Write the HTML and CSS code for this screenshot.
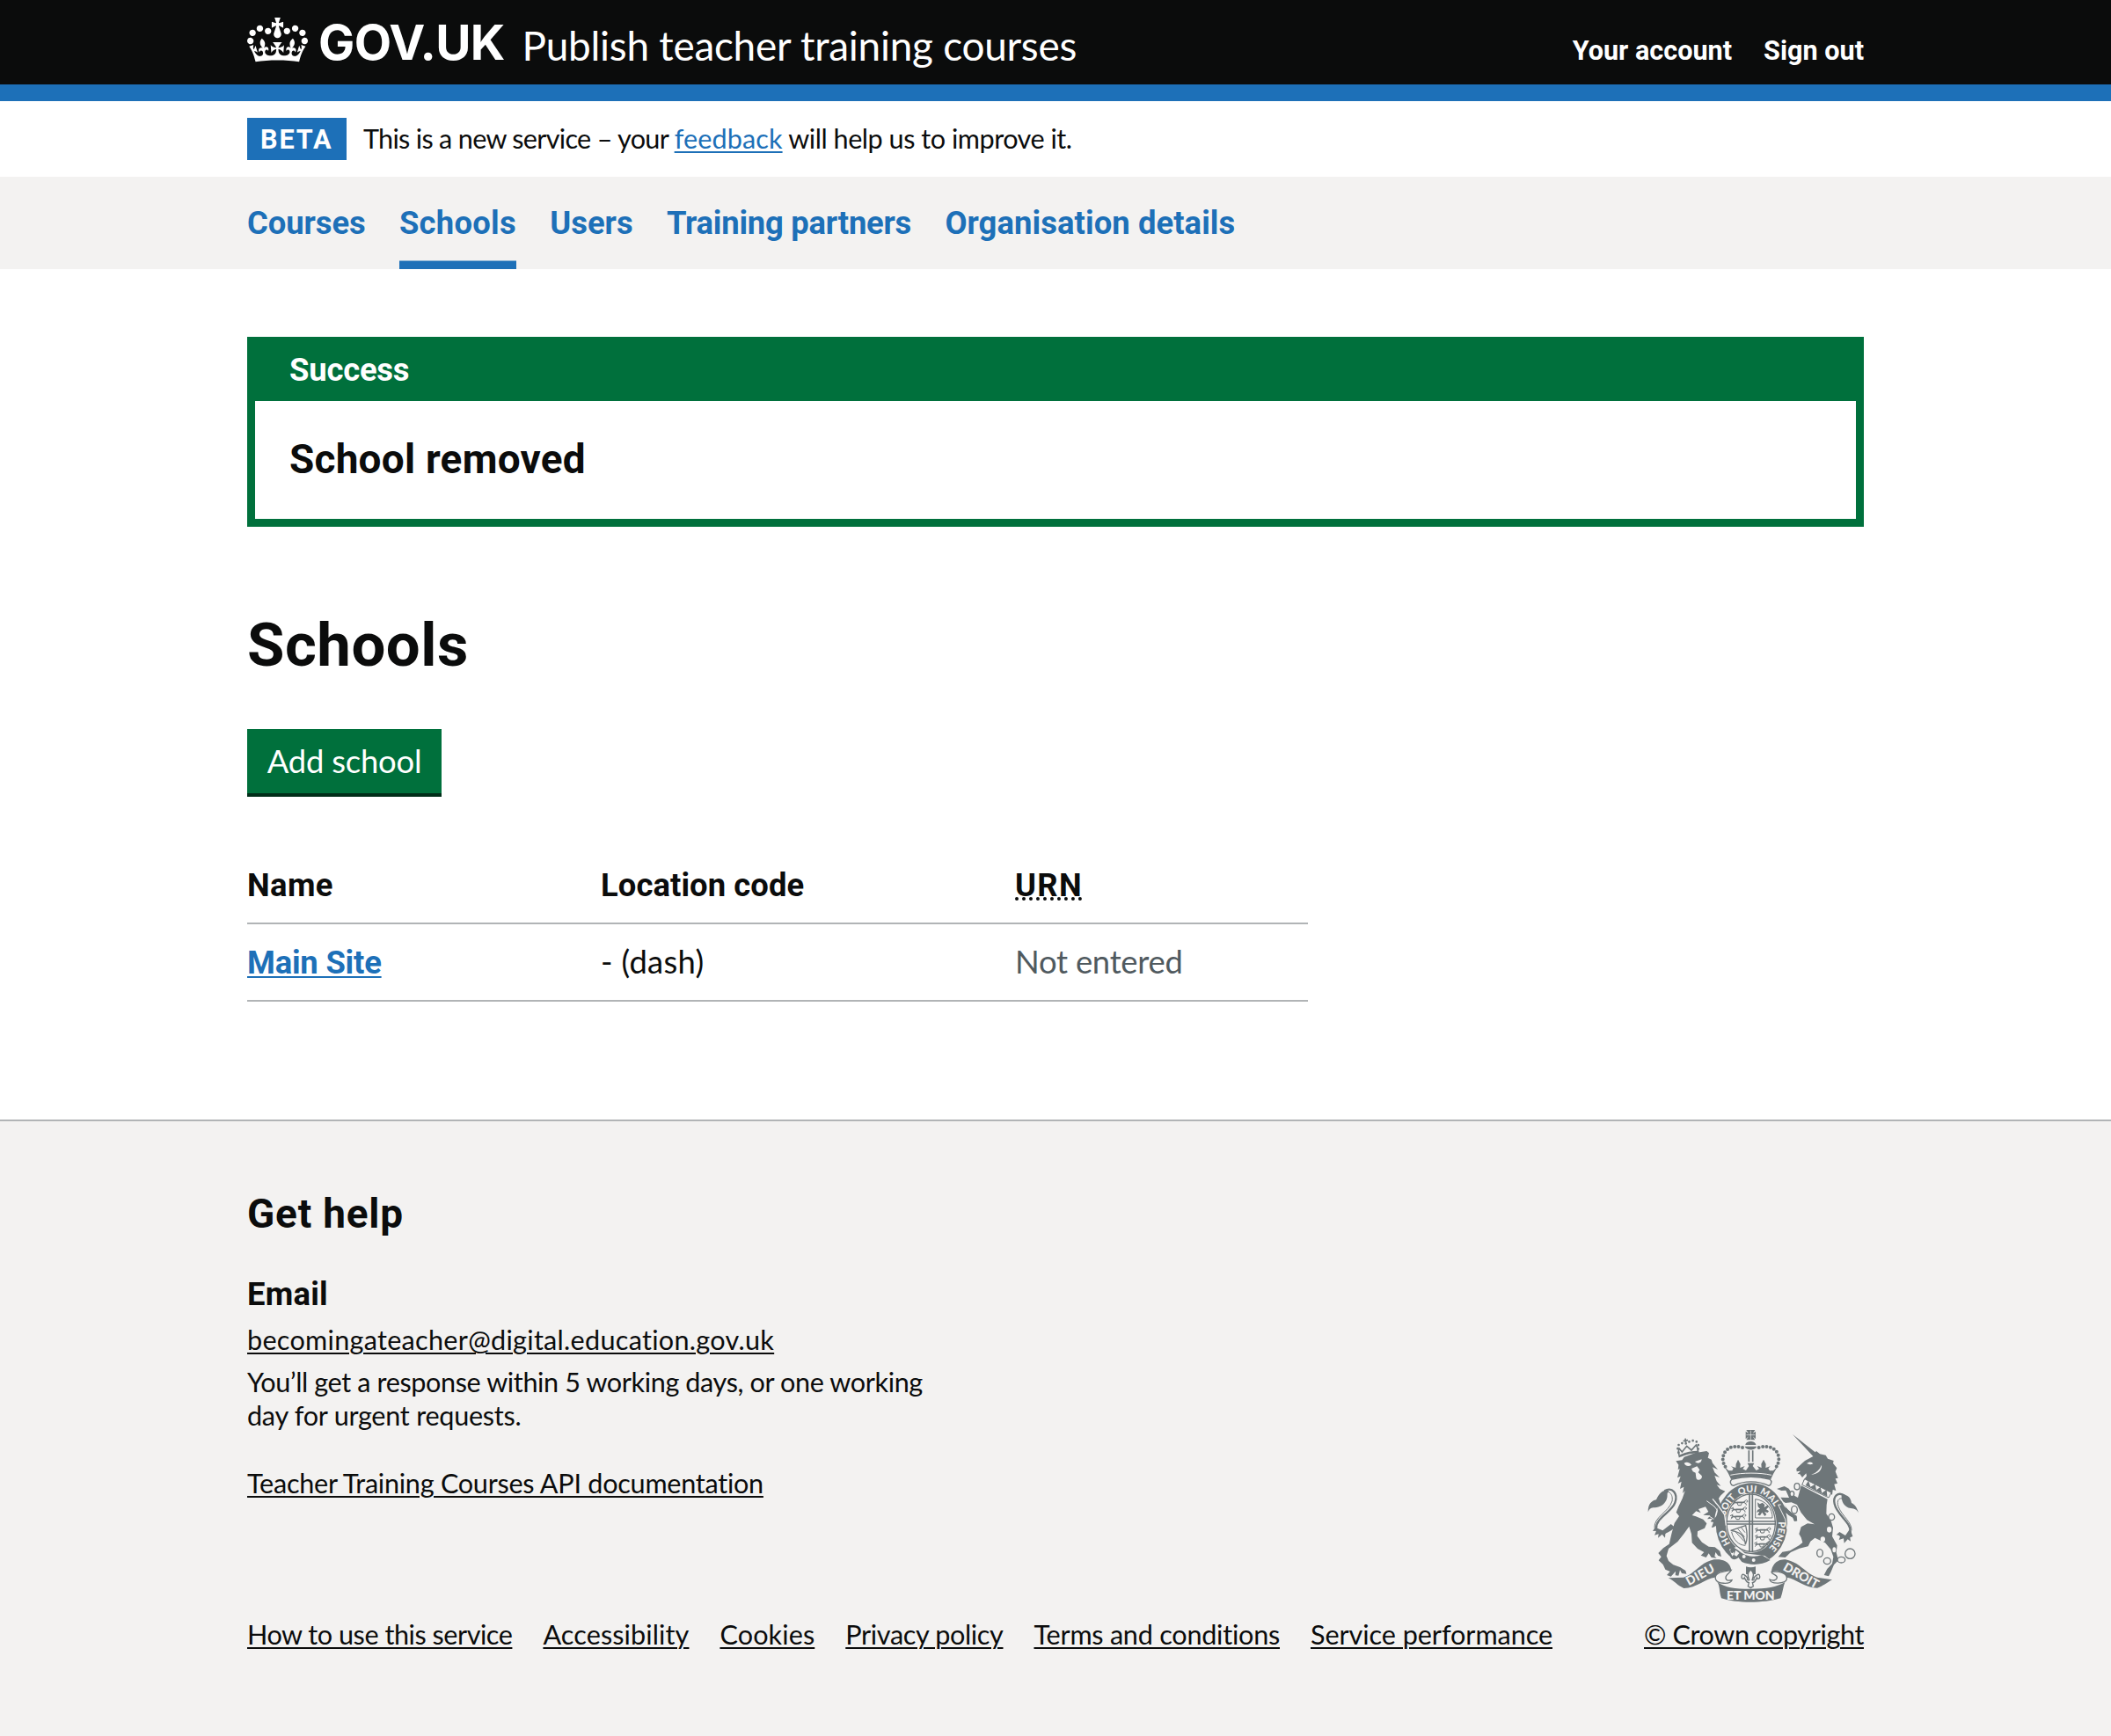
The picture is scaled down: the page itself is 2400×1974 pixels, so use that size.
FILE: index.html
```html
<!DOCTYPE html>
<html lang="en">
<head>
<meta charset="utf-8">
<title>Schools - Publish teacher training courses - GOV.UK</title>
<link rel="stylesheet" href="styles.css">
</head>
<body>
<header class="header">
  <div class="container header-row">
    <a class="logo" href="#">
      <svg class="logo-crown" viewBox="0 0 132 97" aria-hidden="true"><path fill="currentColor" fill-rule="evenodd" d="M25 30.2c3.5 1.5 7.7-.2 9.1-3.7 1.5-3.6-.2-7.8-3.9-9.2-3.6-1.4-7.6.3-9.1 3.9-1.4 3.5.3 7.5 3.9 9zM9 39.5c3.6 1.5 7.8-.2 9.2-3.7 1.5-3.6-.2-7.8-3.9-9.1-3.6-1.5-7.6.2-9.1 3.8-1.4 3.5.3 7.5 3.8 9zM4.4 57.2c3.5 1.5 7.7-.2 9.1-3.8 1.5-3.6-.2-7.7-3.9-9.1-3.5-1.5-7.6.3-9.1 3.8-1.4 3.5.3 7.6 3.9 9.1zm38.3-21.4c3.5 1.5 7.7-.2 9.1-3.8 1.5-3.6-.2-7.7-3.9-9.1-3.6-1.5-7.6.3-9.1 3.8-1.3 3.6.4 7.7 3.9 9.1zm64.4-5.6c-3.6 1.5-7.8-.2-9.1-3.7-1.5-3.6.2-7.8 3.8-9.2 3.6-1.4 7.7.3 9.2 3.9 1.3 3.5-.4 7.5-3.9 9zm15.9 9.3c-3.6 1.5-7.7-.2-9.1-3.7-1.5-3.6.2-7.8 3.7-9.1 3.6-1.5 7.7.2 9.2 3.8 1.5 3.5-.3 7.5-3.8 9zm4.7 17.7c-3.6 1.5-7.8-.2-9.2-3.8-1.5-3.6.2-7.7 3.9-9.1 3.6-1.5 7.7.3 9.2 3.8 1.3 3.5-.4 7.6-3.9 9.1zM89.3 35.8c-3.6 1.5-7.8-.2-9.2-3.8-1.4-3.6.2-7.7 3.9-9.1 3.6-1.5 7.7.3 9.2 3.8 1.4 3.6-.3 7.7-3.9 9.1zM69.7 17.7l8.9 4.7V9.3l-8.9 2.8c-.2-.3-.5-.6-.9-.9L72.4 0H59.6l3.5 11.2c-.3.3-.6.5-.9.9l-8.8-2.8v13.1l8.8-4.7c.3.3.6.7.9.9l-5 15.4v.1c-.2.8-.4 1.6-.4 2.4 0 4.1 3.1 7.5 7 8.1h.2c.3 0 .7.1 1 .1.4 0 .7 0 1-.1h.2c4-.6 7.1-4.1 7.1-8.1 0-.8-.1-1.7-.4-2.4V34l-5.1-15.4c.4-.2.7-.6 1-.9zM66 92.8c16.9 0 32.8 1.1 47.1 3.2 4-16.9 8.9-26.7 14-33.5l-9.6-3.4c1 4.9 1.1 7.2 0 10.2-1.5-1.4-3-4.3-4.2-8.7L108.6 76c2.8-2 5-3.2 7.5-3.3-4.4 9.4-10 11.9-13.6 11.2-4.3-.8-6.3-4.6-5.6-7.9 1-4.7 5.7-5.9 8-.5 4.3-8.7-3-11.4-7.6-8.8 7.1-7.2 7.9-13.5 2.1-21.1-8 6.1-8.1 12.3-4.5 20.8-4.7-5.4-12.1-2.5-9.5 6.2 3.4-5.2 7.9-2 7.2 3.1-.6 4.3-6.4 7.8-13.5 7.2-10.3-.9-10.9-8-11.2-13.8 2.5-.5 7.1 1.8 11 7.3L80.2 60c-4.1 4.4-8 5.3-12.3 5.4 1.4-4.4 8-11.6 8-11.6H55.5s6.4 7.2 7.9 11.6c-4.2-.1-8-1-12.3-5.4l1.4 16.4c3.9-5.5 8.5-7.7 10.9-7.3-.3 5.8-.9 12.8-11.1 13.8-7.2.6-12.9-2.9-13.5-7.2-.7-5 3.8-8.3 7.1-3.1 2.7-8.7-4.6-11.6-9.4-6.2 3.7-8.5 3.6-14.7-4.6-20.8-5.8 7.6-5 13.9 2.2 21.1-4.7-2.6-11.9.1-7.7 8.8 2.3-5.5 7.1-4.2 8.1.5.7 3.3-1.3 7.1-5.7 7.9-3.5.7-9-1.8-13.5-11.2 2.5.1 4.7 1.3 7.5 3.3l-4.7-15.4c-1.2 4.4-2.7 7.2-4.3 8.7-1.1-3-.9-5.3 0-10.2l-9.5 3.4c5 6.9 9.9 16.7 14 33.5 14.8-2.1 30.8-3.2 47.7-3.2z"/></svg>
      <span class="logo-text">GOV.UK</span>
    </a>
    <a class="service-name" href="#">Publish teacher training courses</a>
    <nav class="account-nav"><a href="#">Your account</a><a href="#">Sign out</a></nav>
  </div>
</header>

<div class="container phase-banner">
  <strong class="tag">BETA</strong>
  <p class="phase-text"><span class="phase-lead">This is a new service – your </span><a class="link phase-link" href="#">feedback</a><span class="phase-tail"> will help us to improve it.</span></p>
</div>

<nav class="primary-nav">
  <ul class="container nav-list">
    <li><a href="#">Courses</a></li>
    <li class="current"><a href="#">Schools</a></li>
    <li><a href="#">Users</a></li>
    <li><a href="#">Training partners</a></li>
    <li><a href="#">Organisation details</a></li>
  </ul>
</nav>

<main class="container main">
  <section class="notification">
    <h2 class="notification-title">Success</h2>
    <p class="notification-body">School removed</p>
  </section>
  <h1 class="page-title">Schools</h1>
  <a class="button" href="#">Add school</a>
  <table class="table">
    <thead><tr><th class="col-name">Name</th><th class="col-code">Location code</th><th class="col-urn"><abbr title="Unique reference number">URN</abbr></th></tr></thead>
    <tbody><tr><td class="site"><a class="link" href="#">Main Site</a></td><td class="code">- (dash)</td><td class="hint">Not entered</td></tr></tbody>
  </table>
</main>

<footer class="footer">
  <div class="container">
    <h2 class="footer-title">Get help</h2>
    <h3 class="footer-subtitle">Email</h3>
    <p class="footer-email"><a href="#">becomingateacher@digital.education.gov.uk</a></p>
    <p class="footer-note"><span class="note-a">You’ll get a response within 5 working days, or one working</span><br><span class="note-b">day for urgent requests.</span></p>
    <div class="footer-meta">
      <div class="footer-left">
        <p class="footer-api"><a href="#">Teacher Training Courses API documentation</a></p>
        <ul class="footer-links">
          <li><a href="#">How to use this service</a></li>
          <li><a href="#">Accessibility</a></li>
          <li><a href="#">Cookies</a></li>
          <li><a href="#">Privacy policy</a></li>
          <li><a href="#">Terms and conditions</a></li>
          <li><a href="#">Service performance</a></li>
        </ul>
      </div>
      <div class="copyright">
        <svg class="crest" viewBox="40 42 722 594" aria-hidden="true">
          <defs>
            <path id="motto" d="M395 473A92 108 0 0 1 303 365A92 108 0 0 1 395 257A92 108 0 0 1 487 365A92 108 0 0 1 395 473"/>
            <g id="beast" fill="none" stroke="currentColor" stroke-width="3">
              <path stroke-width="5" d="M8 7Q12 13 22 10H38Q44 11 46 6"/>
              <path d="M2 8L12 3M12 11L5 19M5 13H10M20 11L23 20H29M36 11L33 20H28M42 10L50 14L51 20M45 6Q52 -2 56 5Q57 10 51 9"/>
            </g>
          </defs>

          <!-- Lion's tail -->
          <path class="fill" d="M42 325C42 295 55 287 70 283C80 260 94 246 113 253C103 262 112 269 104 285C94 306 74 310 60 310C50 311 45 317 42 325Z"/>
          <path class="line" stroke-width="7" d="M98 253C125 238 145 262 134 293C123 326 67 344 70 382C74 405 105 398 130 376"/>
          <path class="line" stroke-width="3" d="M88 262C114 246 128 264 124 288C112 326 62 341 64 379"/>
          <path class="fill" d="M66 377L58 390L70 389L64 404L78 400L76 413L90 401L100 413L101 399L130 374L120 366L92 388Z"/>

          <!-- Lion -->
          <path class="fill" d="M137 151L158 148L165 137L204 123L242 117L250 124L246 140L258 146L262 158L280 180L262 172L269 190L286 207L269 201L276 220L290 236L276 232L287 246L305 254L289 269L280 283L270 292L282 309L296 327L301 352L307 375L303 385L296 374L291 386L284 371L273 389L270 374L258 378L266 360L255 358L262 347L244 349L254 337L230 335L248 324L238 307L214 315L222 328L206 322L192 336L205 340L230 350L242 364L235 380L211 391L210 407L226 428L249 443L270 445L287 458L292 477L281 474L272 462L269 476L276 482L258 480L249 466L240 480L222 473L233 462L211 450L192 430L190 400L182 374L166 397L143 426L112 450L105 475L112 492L128 505L151 513L170 525L173 536L157 534L151 523L146 542L135 541L136 527L120 545L106 540L117 528L101 521L93 504L78 490L87 478L77 465L94 448L114 434L122 400L132 363L148 339L138 326L146 306L159 279L168 253L160 261L164 239L151 246L156 221L144 228L153 203L142 208L150 177L144 181L146 164Z"/>
          <path class="hole" d="M165 158C174 153 183 156 190 164C181 170 170 169 165 158ZM202 153L225 145C225 157 212 163 202 153ZM190 177L209 169L218 181L213 190L225 201C230 214 207 222 206 208L204 191L195 187Z"/>
          <path class="hole-line" stroke-width="3" d="M242 287L268 306L292 336M249 338L267 350"/>
          <path class="line" stroke-width="5" d="M149 136C146 124 144 116 148 108L158 120L174 100L190 114L206 96C211 103 212 112 212 122C192 120 168 126 149 136Z"/>
          <path class="line" stroke-width="7" d="M152 133C172 124 194 120 215 120"/>
          <path class="dots" stroke-width="8" d="M146 122C137 95 151 86 173 92C194 73 219 80 213 111"/>
          <path class="line" stroke-width="5" d="M169 74L171 90M162 83L178 80"/>

          <!-- Unicorn's tail -->
          <path class="fill" d="M760 328C754 316 748 314 733 312C712 309 700 289 702 266C721 264 733 275 736 294C748 300 754 309 760 328Z"/>
          <path class="line" stroke-width="7" d="M714 270C690 253 672 271 678 297C686 335 734 359 732 392C727 412 706 416 693 400"/>
          <path class="line" stroke-width="3" d="M704 279C687 276 686 295 692 309C706 341 737 359 736 388"/>
          <path class="fill" d="M695 393L684 403L698 405L693 420L709 415L711 431L723 418L733 425L731 412L740 408L731 382L715 405Z"/>

          <!-- Unicorn -->
          <path class="fill" d="M535 60L612 121L616 117L628 127L648 131L655 143L675 150L673 159L686 175L681 187L690 209L681 211L688 227L677 230L683 252L672 249L670 266L571 218L583 202L581 193L568 207L560 196L552 195L562 185L549 187L548 177L563 163L577 150L605 135Z"/>
          <path class="hole" d="M583 159C593 151 601 154 605 160C597 164 590 163 583 159ZM634 164C637 181 620 197 598 197C615 192 627 181 634 164ZM576 212L667 259L658 276L567 232Z"/>
          <path class="line" stroke-width="3" d="M576 212L667 259L658 276L567 232Z"/>
          <path class="fill" d="M579 234L589 218L596 239L612 230L616 250L630 239L635 260L651 248L653 272Z"/>
          <path class="fill" d="M564 235L654 281L651 301L650 331L666 355L673 379L670 408L687 439L684 463L691 490L676 505L665 531L658 544L642 540L653 519L670 501L674 478L665 452L646 430L611 413L596 425L588 442L558 449L529 462L510 480L486 478L500 461L526 457L557 439L569 429L564 412L557 400L564 376L586 364L610 367L584 352L564 327L550 300L531 292L511 294L496 285L519 317L535 331L547 338L551 355L541 356L537 345L514 331L494 304L486 284L494 275L523 276L512 251L497 252L481 246L507 237L522 245L536 266L553 276Z"/>
          <g class="rings">
            <ellipse cx="550" cy="238" rx="9" ry="11"/><ellipse cx="533" cy="263" rx="7" ry="9"/><ellipse cx="541" cy="317" rx="10" ry="13"/>
            <ellipse cx="668" cy="342" rx="10" ry="11"/><ellipse cx="628" cy="465" rx="10" ry="13"/><ellipse cx="653" cy="492" rx="12" ry="11"/><ellipse cx="701" cy="488" rx="13" ry="10"/><circle cx="731" cy="467" r="17"/>
          </g>
          <path class="hole" d="M652 385a8 10 0 1 0 16 0a8 10 0 1 0 -16 0ZM630 418a8 9 0 1 0 16 0a8 9 0 1 0 -16 0ZM671 454a6 9 0 1 0 12 0a6 9 0 1 0 -12 0Z"/>

          <!-- Garter -->
          <ellipse class="hole" cx="395" cy="365" rx="127" ry="144"/>
          <ellipse class="fill" cx="395" cy="365" rx="122" ry="139"/>
          <ellipse class="hole" cx="393" cy="362" rx="87" ry="102"/>
          <ellipse class="line" stroke-width="4" cx="393" cy="362" rx="83" ry="98"/>
          <path class="line" stroke-width="5" d="M388 262V462M398 262V462M308 357H478M308 366H478"/>
          <text class="crest-motto"><textPath href="#motto" startOffset="86">HO</textPath></text>
          <text class="crest-motto"><textPath href="#motto" startOffset="184">SOIT</textPath></text>
          <text class="crest-motto"><textPath href="#motto" startOffset="271">QUI</textPath></text>
          <text class="crest-motto"><textPath href="#motto" startOffset="342">MAL</textPath></text>
          <text class="crest-motto"><textPath href="#motto" startOffset="464">PENSE</textPath></text>
          <path class="fill" d="M270 279L281 273L302 335L307 374L300 386L292 374L282 388L273 372L262 378L266 350L282 330Z"/>
          <path class="hole-line" stroke-width="4" d="M262 280L282 304L303 334L308 371"/>
          <path class="hole-line" stroke-width="3" d="M513 300L486 300L510 350L516 383"/>
          <path class="fill" d="M497 287L508 307L534 330L549 338L550 355L541 356L535 343L511 328L495 303Z"/>

          <!-- Quartered shield -->
          <use href="#beast" x="326" y="282"/><use href="#beast" x="322" y="306"/><use href="#beast" x="320" y="330"/>
          <use href="#beast" x="404" y="376"/><use href="#beast" x="404" y="400"/><use href="#beast" x="402" y="424"/>
          <path class="line" stroke-width="3" d="M408 281V345H466C468 315 443 285 408 281Z"/>
          <path class="fill" d="M415 292l8 6 9-5 8 7-2 9 11-7 5 5-9 9 9 6-4 5-11-3 7 9-6 6-9-13-7 11-8-2 6-12-10 3 4-9 8-3-7-7z"/>
          <path class="line" stroke-width="4" d="M324 388L375 371C382 401 379 425 374 436C372 403 353 392 324 388Z"/>
          <path class="line" stroke-width="3" d="M337 389L370 425M348 382L371 410M360 378L373 395M327 393C333 420 350 438 374 439"/>

          <!-- Buckle and strap -->
          <path class="hole" d="M319 452L345 443L372 466L440 474L458 488L436 507L340 502Z"/>
          <path class="fill" d="M336 447C327 443 319 453 324 462C329 469 336 462 332 459C340 467 330 478 322 478C329 490 343 488 350 480L362 495C386 506 426 509 459 489L430 472C400 482 370 474 349 455Z"/>
          <path class="hole" d="M341 455L353 465L344 476L335 471ZM363 477a6 6 0 1 0 12 0a6 6 0 1 0 -12 0ZM396 489a6 6 0 1 0 12 0a6 6 0 1 0 -12 0Z"/>

          <!-- Crown -->
          <path class="fill" d="M377 45H407L399 57L409 50V76L399 67L407 79H377L385 67L375 76V50L385 57Z"/>
          <path class="hole-line" stroke-width="2" d="M392 47V78M377 62H407"/>
          <path class="fill" d="M374 96C376 80 408 80 410 96ZM372 101H412C409 116 376 116 372 101Z"/>
          <path class="line" stroke-width="5" d="M386 115V154M399 115V154"/>
          <path class="dots" stroke-width="12" d="M364 105C329 95 299 108 297 145C298 158 302 166 308 174"/>
          <path class="dots" stroke-width="12" d="M420 105C455 95 487 108 488 145C487 158 483 166 477 174"/>
          <path class="fill" d="M300 169L317 184L329 184L333 176L325 169L341 174L342 161L349 146L357 161L356 174L372 168L365 178L376 183L386 168L381 158H404L399 168L411 183L421 178L414 168L429 174L428 161L436 146L444 161L443 174L459 169L452 176L457 184L469 184L485 169C472 188 466 202 461 213C417 204 367 204 325 213C319 200 314 187 300 169Z"/>
          <path class="hole-line" stroke-width="3" d="M323 199C365 190 423 190 463 199"/>
          <path class="plate" d="M329 213C369 203 417 203 457 213C466 219 463 232 454 235C416 217 370 217 333 235C322 232 319 219 329 213Z"/>

          <!-- Ribbons -->
          <path class="fill" d="M111 550L163 548C203 535 219 497 267 487C302 484 321 496 326 523C297 531 284 521 270 548C239 551 207 584 164 585C141 575 132 560 111 550Z"/>
          <path class="fill" d="M670 556L619 548C579 535 563 499 516 488C486 482 463 505 463 529C487 523 500 529 514 548C544 551 575 584 619 584C640 577 650 567 670 556Z"/>
          <path class="plate" d="M326 523C299 528 267 531 272 553C277 571 322 573 328 557C320 559 307 561 307 549C306 538 322 533 326 523ZM463 529C486 526 519 532 515 554C511 571 459 572 457 555C470 561 481 557 482 549C483 538 464 539 463 529Z"/>
          <path class="fill" d="M278 563C305 583 337 587 392 587C446 587 481 581 509 564C503 578 502 598 494 619C434 637 346 637 292 619C284 595 288 579 278 563Z"/>
          <text class="crest-text" x="392" y="624" text-anchor="middle" textLength="164">ET MON</text>
          <text class="crest-text" transform="translate(181 577) rotate(-29)" textLength="104">DIEU</text>
          <text class="crest-text" transform="translate(500 521) rotate(30)" textLength="132">DROIT</text>

          <!-- Fleur-de-lis -->
          <path class="fill" d="M376 511C386 515 399 515 409 511V537H376Z"/>
          <path class="plate" d="M392 521C377 536 384 545 387 557C382 559 379 555 381 549C375 542 363 530 361 545C360 555 370 554 371 549C376 559 377 565 386 566L383 578L392 584L401 578L398 566C407 565 408 559 413 549C414 554 424 555 423 545C421 530 409 542 403 549C405 555 402 559 397 557C400 545 407 536 392 521Z"/>
        </svg>
        <a href="#">© Crown copyright</a>
      </div>
    </div>
  </div>
</footer>
</body>
</html>
```
FILE: styles.css
```css
* { box-sizing: border-box; }
body, h1, h2, h3, p, ul { margin: 0; padding: 0; }
ul { list-style: none; }
a { color: inherit; }

body {
  background: #fff;
  color: #0b0c0c;
  font-family: Lato, sans-serif;
  font-size: 30.6px;
  line-height: 38.3px;
}

.container { width: 1838px; margin: 0 auto; }
.link {
  color: #1d70b8;
  text-decoration-thickness: 2px;
  text-underline-offset: 3.4px;
}

/* Header */
.header { background: #0b0c0c; color: #fff; border-bottom: 19px solid #1d70b8; }
.header a { text-decoration: none; }
.header-row { display: flex; height: 96px; }
.logo { display: flex; }
.logo-crown { width: 69px; height: 50.7px; margin: 20px 12px 0 0; }
.logo-text { font: 700 55px/96px Inter, sans-serif; letter-spacing: -.6px; }
.service-name { margin-left: 19.8px; font-size: 45.9px; line-height: 103px; letter-spacing: -.25px; }
.account-nav {
  display: flex;
  gap: 36px;
  margin-left: auto;
  padding-top: 19px;
  font: 700 30.6px/77px Roboto, sans-serif;
}

/* Phase banner */
.phase-banner { display: flex; height: 86px; }
.tag {
  width: 113px;
  height: 48px;
  margin: 19px 19px 0 0;
  padding-left: 15px;
  background: #1d70b8;
  color: #fff;
  font: 700 30.6px/50px Roboto, sans-serif;
  letter-spacing: 1.9px;
}
.phase-text { line-height: 86px; white-space: nowrap; }
.phase-lead { letter-spacing: -.7px; }
.phase-link { letter-spacing: .1px; }
.phase-tail { letter-spacing: -.48px; }

/* Primary navigation */
.primary-nav { background: #f3f2f1; }
.nav-list { display: flex; gap: 38.3px; font: 700 36.4px/105px Roboto, sans-serif; color: #1d70b8; }
.nav-list a { text-decoration: none; }
.nav-list li { height: 105px; white-space: nowrap; letter-spacing: -.07px; }
.nav-list .current { letter-spacing: .26px; box-shadow: inset 0 -9.5px #1d70b8; }
.nav-list li:nth-child(3) { letter-spacing: .03px; }
.nav-list li:nth-child(4) { letter-spacing: -.23px; }
.nav-list li:nth-child(5) { letter-spacing: .08px; }

/* Main */
.main { padding: 77px 0 133.7px; }
.notification { border: 9.6px solid #00703c; border-top: 0; font-family: Roboto, sans-serif; }
.notification-title {
  height: 72.6px;
  padding-left: 39px;
  background: #00703c;
  color: #fff;
  font-size: 36.4px;
  line-height: 76px;
  letter-spacing: -.2px;
}
.notification-body { height: 134px; padding-left: 39px; font-size: 45.9px; font-weight: 700; line-height: 132.6px; letter-spacing: .25px; }
.page-title { margin-top: 97.5px; font: 700 68.9px/76.6px Roboto, sans-serif; letter-spacing: .5px; }
.button {
  display: block;
  width: 221px;
  margin-top: 56.6px;
  background: #00703c;
  box-shadow: 0 4px 0 #002d18;
  color: #fff;
  font-size: 36.4px;
  line-height: 73px;
  letter-spacing: -.2px;
  text-align: center;
  text-decoration: none;
}
.table { width: 1206px; margin-top: 61px; border-collapse: separate; border-spacing: 0; table-layout: fixed; font-size: 36.4px; }
.table th, .table td { height: 88px; padding: 0; border-bottom: 2px solid #b1b4b6; line-height: 86px; text-align: left; vertical-align: top; }
.table th, .table .site { font-family: Roboto, sans-serif; font-weight: 700; padding-top: 1px; line-height: 85px; }
.table .code, .table .hint { line-height: 84.2px; }
.col-name { width: 402px; letter-spacing: .4px; }
.col-code { width: 471px; letter-spacing: .08px; }
.col-urn { letter-spacing: 1.3px; }
.site { letter-spacing: -.2px; }
.code { letter-spacing: .3px; }
.hint { color: #505a5f; letter-spacing: -.25px; }
abbr { text-decoration: underline dotted 3.7px; text-underline-offset: 1px; text-decoration-skip-ink: none; }

/* Footer */
.footer { min-height: 701px; padding-top: 77px; border-top: 2px solid #b1b4b6; background: #f3f2f1; }
.footer a { text-decoration-thickness: 2px; text-underline-offset: 3px; }
.footer-title { font: 700 45.9px/57.4px Roboto, sans-serif; letter-spacing: .8px; }
.footer-subtitle { margin-top: 38.2px; font: 700 36.4px/47.9px Roboto, sans-serif; letter-spacing: .25px; }
.footer-email { margin-top: 9.3px; letter-spacing: .28px; }
.footer-note { margin-top: 9.7px; }
.note-a { letter-spacing: -.38px; }
.note-b { letter-spacing: -.26px; }
.footer-meta { display: flex; justify-content: space-between; align-items: flex-end; }
.footer-api { margin-top: 38.6px; letter-spacing: -.26px; }
.footer-links { display: flex; gap: 35px; margin-top: 133.8px; white-space: nowrap; }
.footer-links li:nth-child(1) { letter-spacing: -.47px; }
.footer-links li:nth-child(2) { letter-spacing: .1px; }
.footer-links li:nth-child(3) { letter-spacing: .1px; }
.footer-links li:nth-child(4) { letter-spacing: -.35px; }
.footer-links li:nth-child(5) { letter-spacing: -.24px; }
.footer-links li:nth-child(6) { letter-spacing: -.07px; }
.copyright { width: 250px; margin-top: -60px; letter-spacing: -.39px; white-space: nowrap; }

/* Royal coat of arms */
.crest { display: block; width: 240.7px; height: 198px; margin: 0 0 17.5px 4.3px; color: #6e7679; }
.crest .fill { fill: currentColor; }
.crest .hole { fill: #f3f2f1; }
.crest .line { fill: none; stroke: currentColor; }
.crest .hole-line { fill: none; stroke: #f3f2f1; }
.crest .plate { fill: #f3f2f1; stroke: currentColor; stroke-width: 4px; }
.crest .dots { fill: none; stroke: currentColor; stroke-linecap: round; stroke-dasharray: 0 13.2; }
.crest .rings { fill: #f3f2f1; stroke: currentColor; stroke-width: 4px; }
.crest-motto { fill: #f3f2f1; font: 900 32px Lato, sans-serif; letter-spacing: 0; }
.crest-text { fill: #f3f2f1; font: 900 42px Lato, sans-serif; letter-spacing: 0; }
```
